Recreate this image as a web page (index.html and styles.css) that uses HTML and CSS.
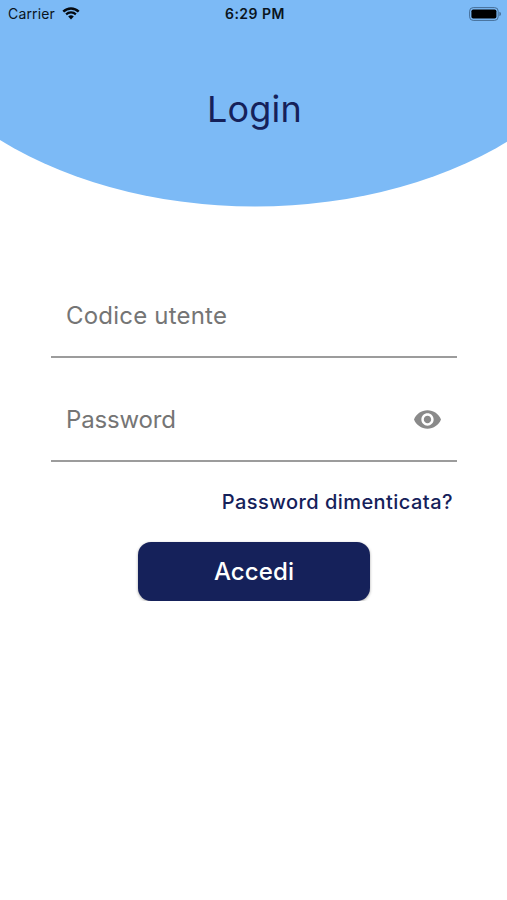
FILE: index.html
```
<!DOCTYPE html>
<html lang="it">
<head>
    <meta charset="UTF-8" />
    <meta name="viewport" content="width=device-width, initial-scale=1.0" />
    <title>Login</title>
    <link rel="stylesheet" href="styles.css">
</head>
<body>

    <header class="header">
        <div class="status-bar">
            <div class="carrier">
                <span>Carrier</span>
                <svg class="wifi" viewBox="0 0 18 13" width="18" height="13">
                    <path d="M1.3 4.6 A11 11 0 0 1 16.7 4.6" fill="none" stroke="#050a10" stroke-width="2.5" />
                    <path d="M4.1 7.4 A7 7 0 0 1 13.9 7.4" fill="none" stroke="#050a10" stroke-width="2.2" />
                    <path d="M9 12.4 L6.2 9.6 A4 4 0 0 1 11.8 9.6 Z" fill="#050a10" />
                </svg>
            </div>
            <span class="time">6:29 PM</span>
            <svg class="battery" viewBox="0 0 33 14" width="33" height="14">
                <rect x="0.6" y="0.6" width="28.6" height="12.8" rx="3.6" fill="none" stroke="#456d96" stroke-width="1" />
                <rect x="2.4" y="2.4" width="25" height="9.2" rx="1.8" fill="#000" />
                <path d="M30.4 4.8 Q32 5.4 32 7 Q32 8.6 30.4 9.2 Z" fill="#456d96" />
            </svg>
        </div>
        <h1 class="title">Login</h1>
    </header>

    <form class="login-form">
        <label class="field">
            <input type="text" placeholder="Codice utente" />
        </label>
        <label class="field">
            <input class="password" type="password" placeholder="Password" />
            <svg class="eye" viewBox="1 4.5 22 15" width="27" height="19">
                <path fill="#8a8a8a" d="M12 4.5C7 4.5 2.73 7.61 1 12c1.73 4.39 6 7.5 11 7.5s9.27-3.11 11-7.5c-1.73-4.39-6-7.5-11-7.5zM12 17c-2.76 0-5-2.24-5-5s2.24-5 5-5 5 2.24 5 5-2.24 5-5 5zm0-8c-1.66 0-3 1.34-3 3s1.34 3 3 3 3-1.34 3-3-1.34-3-3-3z" />
            </svg>
        </label>
        <a class="forgot">Password dimenticata?</a>
        <button class="login-btn" type="button">Accedi</button>
    </form>

</body>
</html>
```

FILE: styles.css
```
body {
    background-color: #fff;
    color: #15215a;
    margin: 0;
    font-family: Inter, "Liberation Sans", sans-serif;
}

.header {
    height: 207px;
    background-color: #7cbaf6;
    clip-path: ellipse(380px 257px at 255px -50.5px);
}

.status-bar {
    display: grid;
    grid-template-columns: 1fr auto 1fr;
    align-items: center;
    height: 27px;
    padding: 0 5px 0 8px;
    color: #0a1420;
    font-size: 14px;
}

.carrier {
    display: flex;
    align-items: center;
    gap: 7px;
    letter-spacing: 0.15px;
}

.wifi {
    margin-top: -1px;
}

.time {
    font-weight: 600;
    letter-spacing: 0.5px;
}

.battery {
    justify-self: end;
}

.title {
    margin: 60px 0 0;
    padding-left: 2px;
    font-size: 36px;
    line-height: 44px;
    font-weight: 400;
    letter-spacing: 0.2px;
    text-align: center;
}

.login-form {
    display: flex;
    flex-direction: column;
    margin: 67px 50px 0 51px;
}

.field {
    display: flex;
    align-items: center;
    height: 82px;
    padding: 0 16px 0 15px;
    border-bottom: 2px solid #9c9c9c;
}

.field + .field {
    margin-top: 20px;
}

.field input {
    flex: 1;
    min-width: 0;
    padding: 0;
    border: 0;
    outline: 0;
    background: none;
    font-family: inherit;
    font-size: 24px;
    letter-spacing: 0.2px;
}

.field .password {
    letter-spacing: -0.15px;
}

.field input::placeholder {
    color: #757575;
}

.forgot {
    align-self: flex-end;
    margin: 26px 4px 0 0;
    font-size: 20px;
    line-height: 28px;
    font-weight: 500;
    letter-spacing: 0.45px;
}

.login-btn {
    align-self: center;
    width: 232px;
    height: 59px;
    margin-top: 25.5px;
    border: 0;
    border-radius: 13px;
    background-color: #15215a;
    box-shadow: 0 1px 3px rgba(0, 0, 0, 0.35);
    color: #fff;
    font-family: inherit;
    font-size: 24px;
    font-weight: 500;
    letter-spacing: 0.1px;
}
```
